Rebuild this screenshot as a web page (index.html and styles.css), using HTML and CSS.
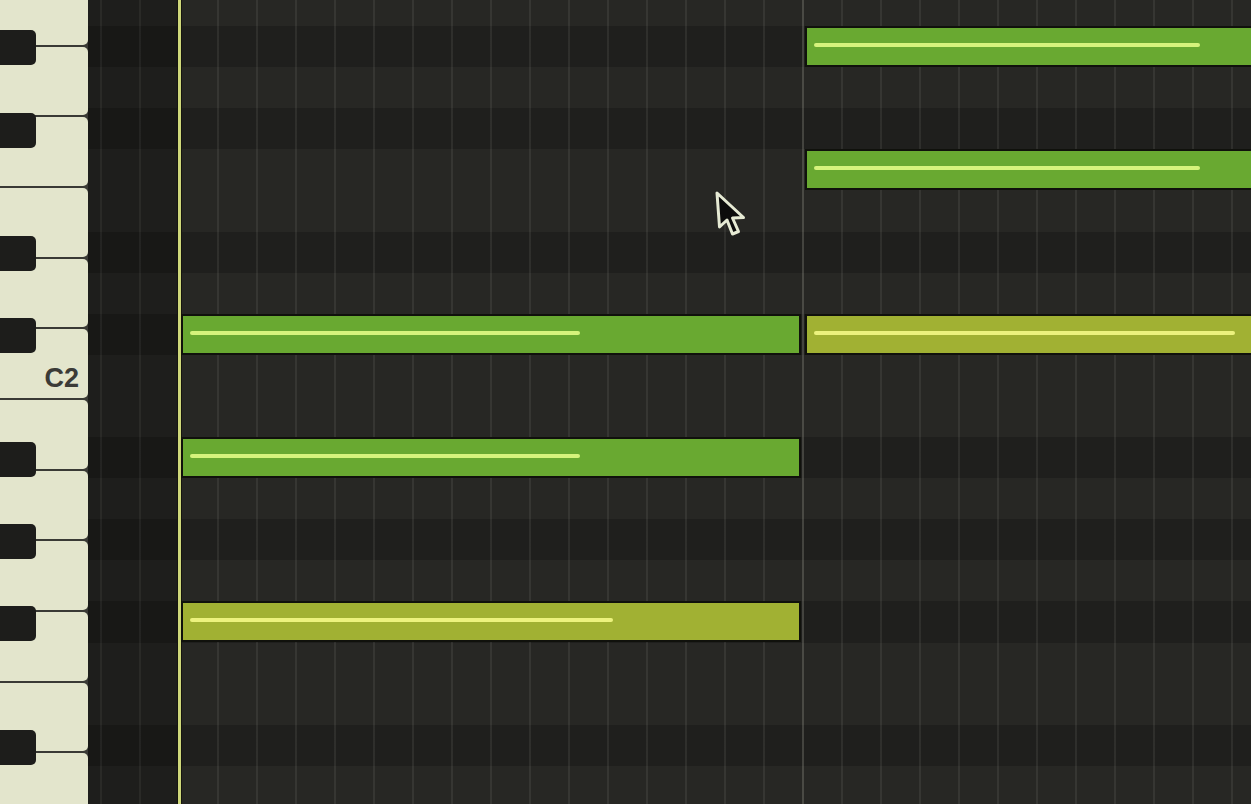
FILE: index.html
```html
<!DOCTYPE html>
<html lang="en">
  <head>
    <meta charset="utf-8" />
    <meta name="viewport" content="width=device-width, initial-scale=1" />
    <link rel="stylesheet" href="styles.css">
    <title>Piano Roll</title>
  </head>
  <body>
    <div class="editor">
      <!-- keyboard -->
      <div class="keys">
        <div class="white-key"></div>
        <div class="white-key"></div>
        <div class="white-key"></div>
        <div class="white-key"></div>
        <div class="white-key"></div>
        <div class="white-key label-key"><span class="label">C2</span></div>
        <div class="white-key"></div>
        <div class="white-key"></div>
        <div class="white-key"></div>
        <div class="white-key"></div>
        <div class="white-key"></div>
        <div class="white-key"></div>

        <div class="black-key" style="top: 30px"></div>
        <div class="black-key" style="top: 113px"></div>
        <div class="black-key" style="top: 236px"></div>
        <div class="black-key" style="top: 318px"></div>
        <div class="black-key" style="top: 442px"></div>
        <div class="black-key" style="top: 524px"></div>
        <div class="black-key" style="top: 606px"></div>
        <div class="black-key" style="top: 730px"></div>
      </div>

      <!-- note grid -->
      <div class="roll">
        <div class="rows">
          <div class="row"></div>
          <div class="row dark"></div>
          <div class="row"></div>
          <div class="row dark"></div>
          <div class="row"></div>
          <div class="row"></div>
          <div class="row dark"></div>
          <div class="row"></div>
          <div class="row dark"></div>
          <div class="row"></div>
          <div class="row"></div>
          <div class="row dark"></div>
          <div class="row"></div>
          <div class="row dark"></div>
          <div class="row"></div>
          <div class="row dark"></div>
          <div class="row"></div>
          <div class="row"></div>
          <div class="row dark"></div>
          <div class="row"></div>
        </div>

        <div class="gridlines"></div>
        <div class="lead-in"></div>
        <div class="bar-line"></div>
        <div class="playhead"></div>

        <div class="note" style="left: 717px; top: 26px; width: 470px"><div class="vel" style="width: 386px"></div></div>
        <div class="note" style="left: 717px; top: 149px; width: 470px"><div class="vel" style="width: 386px"></div></div>
        <div class="note" style="left: 93px; top: 314px; width: 620px"><div class="vel" style="width: 390px"></div></div>
        <div class="note soft" style="left: 717px; top: 314px; width: 470px"><div class="vel" style="width: 421px"></div></div>
        <div class="note" style="left: 93px; top: 437px; width: 620px"><div class="vel" style="width: 390px"></div></div>
        <div class="note soft" style="left: 93px; top: 601px; width: 620px"><div class="vel" style="width: 423px"></div></div>

        <svg class="cursor" width="34" height="50" viewBox="0 0 34 50">
          <path d="M3 3 L5.5 37 L13 30 L18.5 44 L24.5 41.5 L18.5 28 L29.5 27.5 Z" fill="#0c0c0c" stroke="#e6ead4" stroke-width="3" stroke-linejoin="round" />
        </svg>
      </div>
    </div>
  </body>
</html>
```

FILE: styles.css
```css
body {
  margin: 0;
  background-color: #1f1f1d;
  font-family: "Liberation Sans", Arial, sans-serif;
  overflow: hidden;
}

.editor {
  display: flex;
  flex-direction: row;
  width: 1251px;
  height: 804px;
  overflow: hidden;
}

/* keyboard */
.keys {
  position: relative;
  width: 88px;
  flex-shrink: 0;
  display: flex;
  flex-direction: column;
  background-color: #3a3a35;
  overflow: hidden;
}

.white-key {
  flex-shrink: 0;
  height: 68.7px;
  margin-bottom: 2px;
  background-color: #e3e5cc;
  border-radius: 0 5px 5px 0;
}
.white-key:first-child {
  margin-top: -24.2px;
}

.label-key {
  display: flex;
  justify-content: flex-end;
  align-items: flex-end;
  box-sizing: border-box;
  padding: 0 9px 8px 0;
}
.label {
  font-size: 27px;
  font-weight: bold;
  line-height: 24px;
  color: #3b3b37;
}

.black-key {
  position: absolute;
  left: 0;
  width: 36px;
  height: 35px;
  background-color: #1d1d1b;
  border-radius: 0 5px 5px 0;
}

/* grid */
.roll {
  position: relative;
  flex: 1;
  overflow: hidden;
}

.rows {
  display: flex;
  flex-direction: column;
  margin-top: -15px;
}
.row {
  height: 41.1px;
  flex-shrink: 0;
  background-color: #272724;
}
.row.dark {
  background-color: #1f1f1d;
}

.gridlines {
  position: absolute;
  inset: 0;
  background-image: repeating-linear-gradient(
    to right,
    transparent 0,
    transparent 12px,
    rgba(255, 255, 240, 0.07) 12px,
    rgba(255, 255, 240, 0.07) 14px,
    transparent 14px,
    transparent 39px
  );
}

.lead-in {
  position: absolute;
  top: 0;
  bottom: 0;
  left: 0;
  width: 90px;
  background-color: rgba(0, 0, 0, 0.22);
}

.bar-line {
  position: absolute;
  top: 0;
  bottom: 0;
  left: 714px;
  width: 2px;
  background-color: rgba(255, 255, 240, 0.1);
}

.playhead {
  position: absolute;
  top: 0;
  bottom: 0;
  left: 89px;
  width: 3px;
  background-color: #cfd87a;
  border-left: 1px solid #15150f;
  border-right: 1px solid #15150f;
}

/* notes */
.note {
  position: absolute;
  box-sizing: border-box;
  height: 41px;
  padding: 15px 0 0 7px;
  background-color: #69a931;
  border: 2px solid #10110c;
}
.note.soft {
  background-color: #a1b133;
}

.vel {
  height: 4px;
  border-radius: 2px;
  background-color: #d6f37c;
}
.note.soft .vel {
  background-color: #ecf27e;
}

.cursor {
  position: absolute;
  left: 626px;
  top: 190px;
}
```
